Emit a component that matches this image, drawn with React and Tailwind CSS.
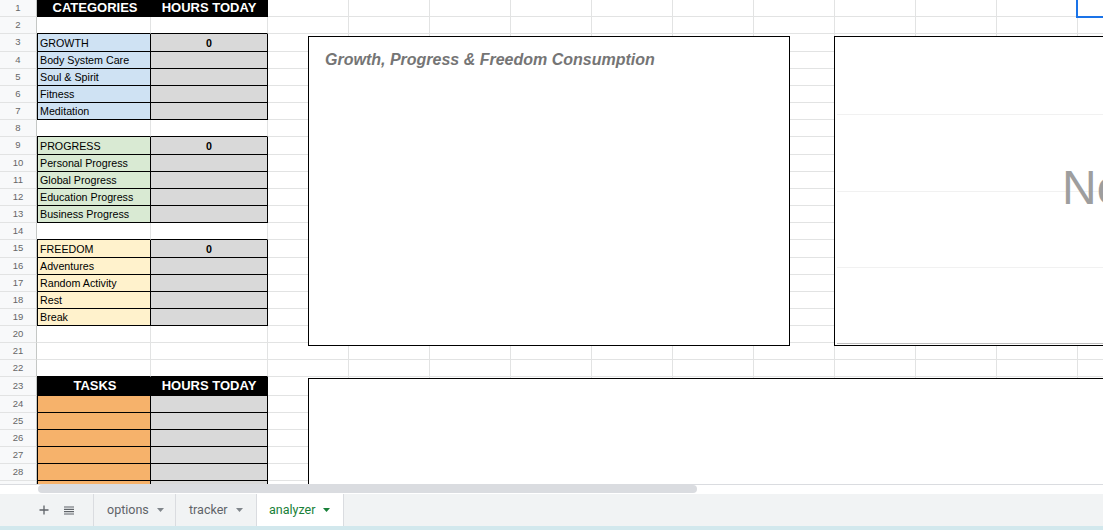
import React from 'react';

// sheet rows: height in px, col A / col B content, block style
const blocks = {
  header: { a: 'bg-black text-white font-bold text-[13px] justify-center', b: 'bg-black text-white font-bold text-[13px] justify-center' },
  growth: { a: 'bg-[#cfe2f3]', b: 'bg-[#d9d9d9] justify-center font-bold' },
  progress: { a: 'bg-[#d9ead3]', b: 'bg-[#d9d9d9] justify-center font-bold' },
  freedom: { a: 'bg-[#fff2cc]', b: 'bg-[#d9d9d9] justify-center font-bold' },
  tasks: { a: 'bg-[#f6b26b]', b: 'bg-[#d9d9d9]' },
};

const rows = [
  { n: 1, h: 17, block: 'header', a: 'CATEGORIES', b: 'HOURS TODAY' },
  { n: 2, h: 17 },
  { n: 3, h: 18, block: 'growth', a: 'GROWTH', b: '0' },
  { n: 4, h: 17, block: 'growth', a: 'Body System Care' },
  { n: 5, h: 17, block: 'growth', a: 'Soul & Spirit' },
  { n: 6, h: 17, block: 'growth', a: 'Fitness' },
  { n: 7, h: 17, block: 'growth', a: 'Meditation' },
  { n: 8, h: 17 },
  { n: 9, h: 18, block: 'progress', a: 'PROGRESS', b: '0' },
  { n: 10, h: 17, block: 'progress', a: 'Personal Progress' },
  { n: 11, h: 17, block: 'progress', a: 'Global Progress' },
  { n: 12, h: 17, block: 'progress', a: 'Education Progress' },
  { n: 13, h: 17, block: 'progress', a: 'Business Progress' },
  { n: 14, h: 17 },
  { n: 15, h: 18, block: 'freedom', a: 'FREEDOM', b: '0' },
  { n: 16, h: 17, block: 'freedom', a: 'Adventures' },
  { n: 17, h: 17, block: 'freedom', a: 'Random Activity' },
  { n: 18, h: 17, block: 'freedom', a: 'Rest' },
  { n: 19, h: 17, block: 'freedom', a: 'Break' },
  { n: 20, h: 17 },
  { n: 21, h: 17 },
  { n: 22, h: 17 },
  { n: 23, h: 19, block: 'header', a: 'TASKS', b: 'HOURS TODAY' },
  { n: 24, h: 17, block: 'tasks' },
  { n: 25, h: 17, block: 'tasks' },
  { n: 26, h: 17, block: 'tasks' },
  { n: 27, h: 17, block: 'tasks' },
  { n: 28, h: 17, block: 'tasks' },
  { n: null, h: 17, block: 'tasks' }, // row 29, only a sliver shows
];

const extraCols = [81, 81, 81, 81, 81, 81, 81, 81, 81, 81, 81];

function SheetRow({ row, next }) {
  const style = row.block ? blocks[row.block] : null;
  const blackBottom = row.block || (next && next.block);
  const bottom = blackBottom ? 'border-b-black' : 'border-b-[#e2e3e3]';
  const right = row.block ? 'border-r-black' : 'border-r-[#e2e3e3]';
  const align = row.block === 'header' ? 'items-center' : 'items-end pb-[1px] leading-[13px]';

  return (
    <div className="flex shrink-0" style={{ height: row.h }}>
      <div className="w-[37px] shrink-0 bg-[#f8f9fa] border-r border-r-[#c4c7c5] border-b border-b-[#e2e3e3] flex items-center justify-center text-[9.5px] text-[#666]">
        {row.n}
      </div>
      <div
        className={`w-[114px] shrink-0 flex pl-[3px] border-r border-b ${align} ${right} ${bottom} ${
          row.block ? 'shadow-[inset_1px_0_0_#000]' : ''
        } ${style ? style.a : ''}`}
      >
        {row.a}
      </div>
      <div className={`w-[117px] shrink-0 flex border-r border-b ${align} ${right} ${bottom} ${style ? style.b : ''}`}>
        {row.b}
      </div>
      {extraCols.map((w, i) => (
        <div key={i} className="shrink-0 border-r border-b border-[#e2e3e3]" style={{ width: w }} />
      ))}
    </div>
  );
}

function Caret({ color }) {
  return (
    <svg width="7" height="4" viewBox="0 0 7 4">
      <path d="M0 0h7L3.5 4z" fill={color} />
    </svg>
  );
}

export default function App() {
  return (
    <div className="w-[1103px] h-[530px] overflow-hidden flex flex-col bg-white font-['Liberation_Sans',Arial,sans-serif] text-[10.7px] text-black">
      {/* sheet */}
      <div className="relative h-[484px] shrink-0 overflow-hidden">
        {rows.map((row, i) => (
          <SheetRow key={i} row={row} next={rows[i + 1]} />
        ))}

        {/* chart 1 */}
        <div className="absolute left-[308px] top-[36px] w-[482px] h-[310px] border border-black bg-white pl-[16px] pt-[14px]">
          <div className="text-[16px] leading-[18px] font-bold italic text-[#757575]">
            Growth, Progress &amp; Freedom Consumption
          </div>
        </div>

        {/* chart 2 */}
        <div className="absolute left-[834px] top-[36px] w-[320px] h-[310px] border border-black bg-white">
          <svg className="absolute left-[2px] top-0" width="320" height="308">
            <line x1="0" x2="320" y1="77.5" y2="77.5" stroke="#f1f1f1" />
            <line x1="0" x2="320" y1="154.5" y2="154.5" stroke="#f1f1f1" />
            <line x1="0" x2="320" y1="230.5" y2="230.5" stroke="#f1f1f1" />
            <line x1="0" x2="320" y1="306.5" y2="306.5" stroke="#bdbdbd" />
          </svg>
          <div className="absolute left-[227px] top-[127px] text-[48px] leading-[48px] text-[#9e9e9e] whitespace-nowrap">
            No data
          </div>
        </div>

        {/* chart 3 */}
        <div className="absolute left-[308px] top-[378px] w-[900px] h-[200px] border border-black bg-white" />

        {/* selected cell */}
        <div className="absolute left-[1076px] top-[-2px] w-[40px] h-[20px] border-2 border-[#1a73e8]" />
      </div>

      {/* horizontal scrollbar */}
      <div className="h-[10px] shrink-0 border-t border-[#dadce0] bg-white pl-[38px]">
        <div className="w-[659px] h-[8px] rounded-full bg-[#dadce0]" />
      </div>

      {/* sheet tabs */}
      <div className="h-[32px] shrink-0 bg-[#f1f3f4] flex font-['Roboto',sans-serif] text-[12.5px] text-[#5f6368]">
        <div className="w-[93px] flex items-center">
          <svg className="ml-[39px]" width="10" height="10" viewBox="0 0 10 10">
            <path d="M5 0.5v9M0.5 5h9" stroke="#5f6368" strokeWidth="1.3" />
          </svg>
          <svg className="ml-[15px]" width="10" height="9" viewBox="0 0 10 9">
            <path d="M0 1h10M0 3.3h10M0 5.6h10M0 8h10" stroke="#5f6368" strokeWidth="1.2" />
          </svg>
        </div>
        <div className="w-[82px] border-l border-[#dadce0] flex items-center pl-[13px] gap-[8px]">
          options <Caret color="#80868b" />
        </div>
        <div className="w-[81px] border-l border-[#dadce0] flex items-center pl-[13px] gap-[8px]">
          tracker <Caret color="#80868b" />
        </div>
        <div className="w-[88px] border-l border-r border-[#dadce0] bg-white flex items-center pl-[12px] gap-[8px] text-[#188038]">
          analyzer <Caret color="#188038" />
        </div>
      </div>
      <div className="h-[4px] shrink-0 bg-[#d2e8ed]" />
    </div>
  );
}
